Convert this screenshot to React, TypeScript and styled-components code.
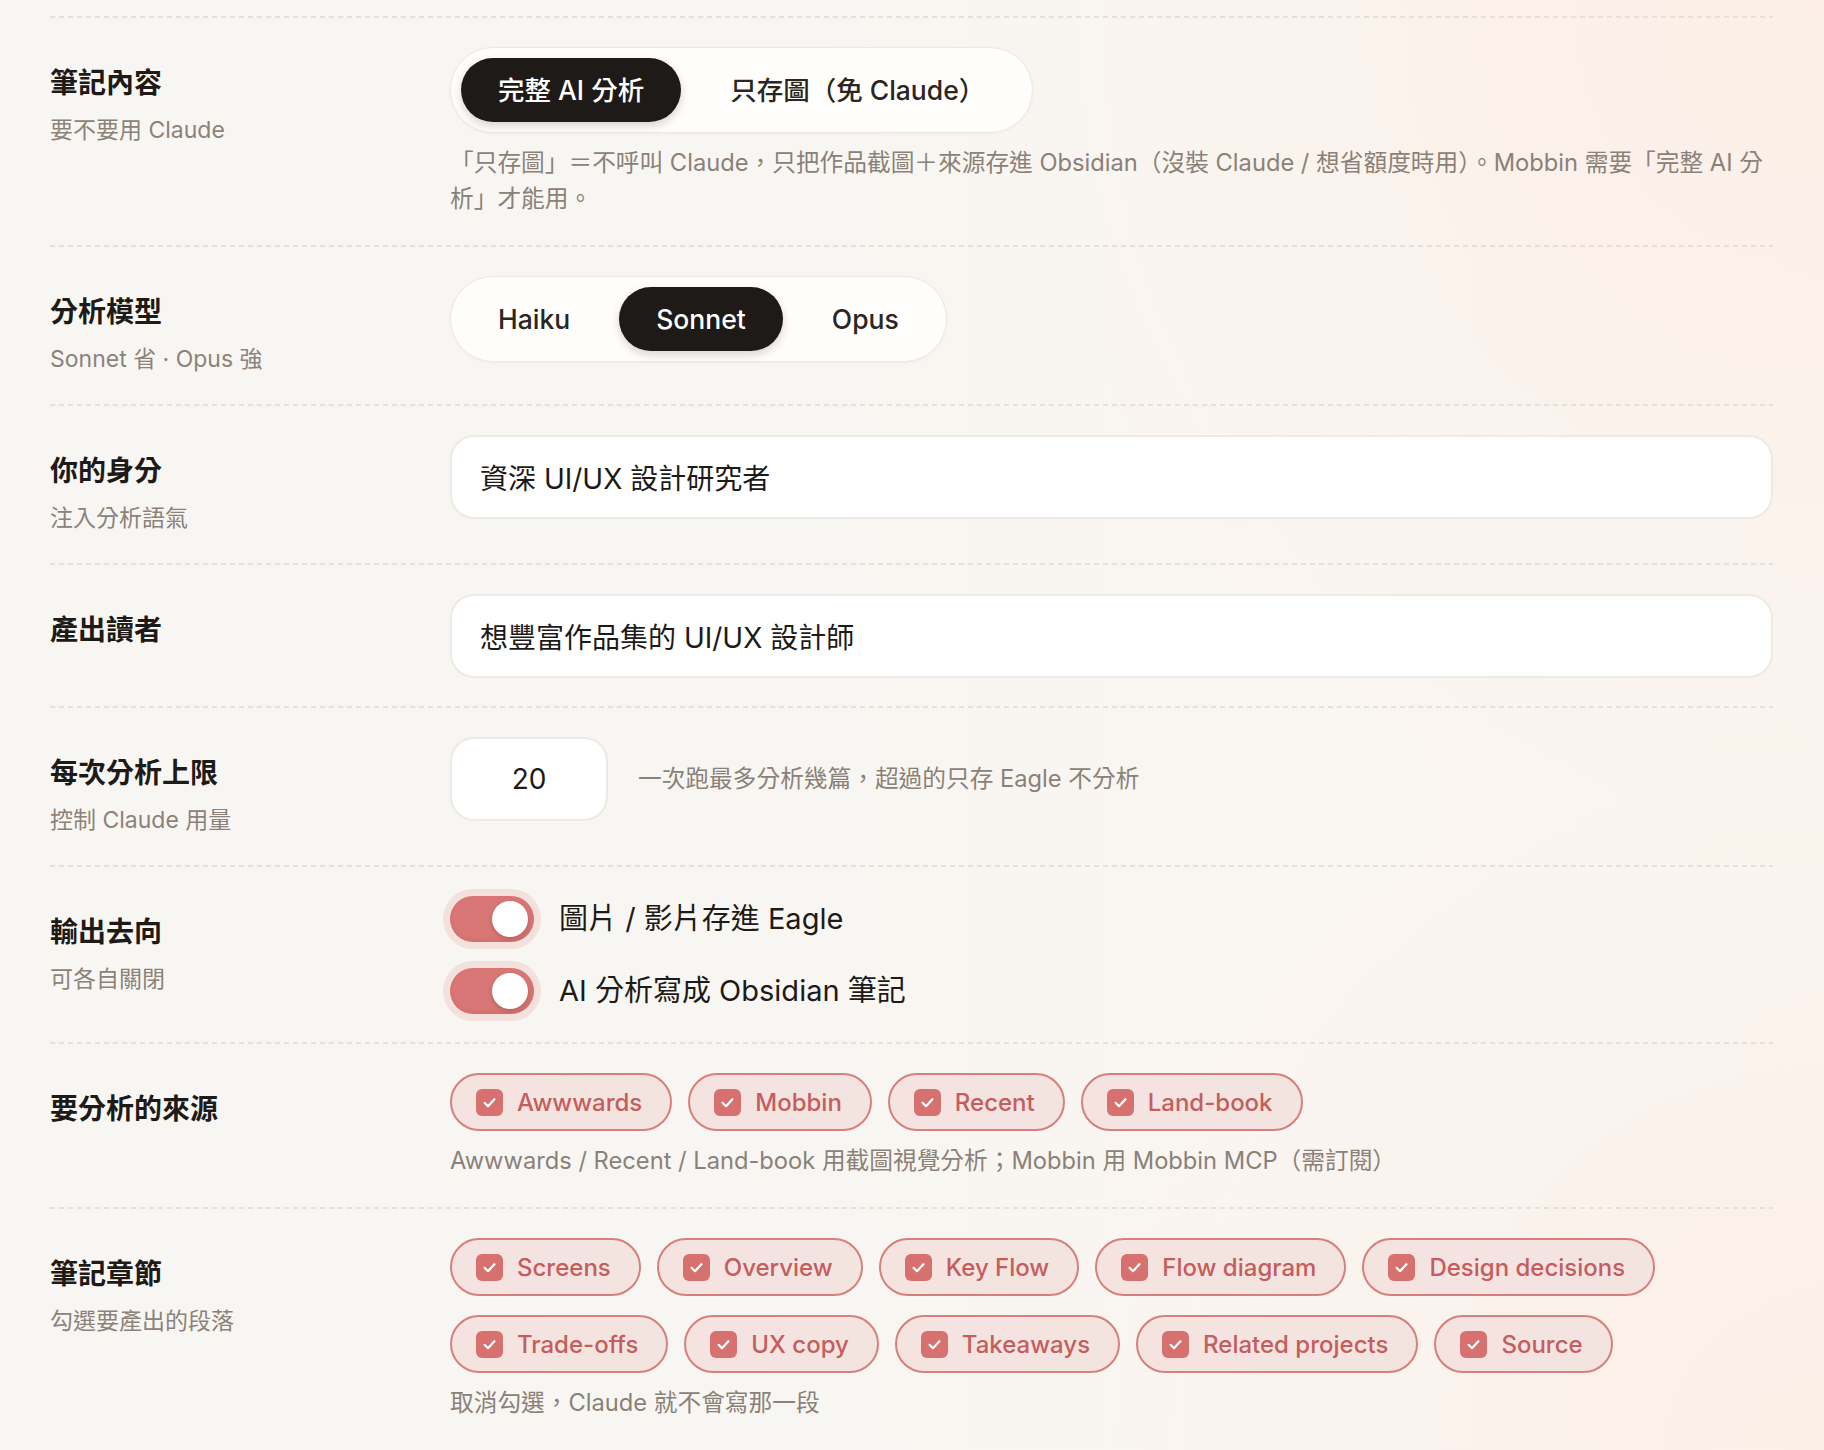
import React from "react";
import styled, { createGlobalStyle } from "styled-components";

const GlobalStyle = createGlobalStyle`
  html, body { margin: 0; padding: 0; }
  body {
    background: #f8f6f2;
    font-family: Inter, "Noto Sans CJK TC", sans-serif;
    color: #1d1a17;
    -webkit-font-smoothing: antialiased;
  }
  * { box-sizing: border-box; }
`;

const Page = styled.div`
  min-height: 1450px;
  padding: 16px 51px 0 50px;
  background:
    radial-gradient(ellipse 45% 60% at 100% 0%, rgba(252, 238, 230, 0.9), rgba(252, 238, 230, 0) 100%),
    radial-gradient(ellipse 40% 50% at 100% 100%, rgba(252, 238, 230, 0.8), rgba(252, 238, 230, 0) 100%),
    linear-gradient(90deg, #f8f6f2 0%, #f8f6f2 45%, #fbf5f0 100%);
`;

const Divider = styled.div`
  height: 2px;
  background: repeating-linear-gradient(90deg, #e5e0d9 0 5px, transparent 5px 9px);
`;

const Row = styled.div`
  display: grid;
  grid-template-columns: 400px 1fr;
  padding: 29px 0 28px;
`;

const LabelCol = styled.div`
  padding-top: 18px;
`;

const Title = styled.div`
  font-size: 28px;
  line-height: 36px;
  font-weight: 700;
  color: #1d1a17;
`;

const Sub = styled.div`
  margin-top: 12px;
  font-size: 23px;
  line-height: 34px;
  color: #8b8279;
`;

const Control = styled.div`
  min-width: 0;
  display: flex;
  flex-direction: column;
  align-items: flex-start;
`;

const Hint = styled.div`
  margin-top: 12px;
  font-size: 23.7px;
  line-height: 36px;
  color: #8a8178;
`;

const Segmented = styled.div`
  display: inline-flex;
  gap: 12px;
  padding: 10px;
  border: 1px solid #ece8e2;
  background: #fffefd;
  border-radius: 999px;
  box-shadow: 0 1px 3px rgba(80, 60, 40, 0.04);
`;

const SegButton = styled.button<{ $active?: boolean }>`
  height: 64px;
  padding: 0 37px;
  border: none;
  border-radius: 999px;
  font-family: inherit;
  font-size: 26.5px;
  line-height: 1;
  font-weight: 500;
  white-space: nowrap;
  cursor: pointer;
  background: ${(p) => (p.$active ? "#1d1a17" : "transparent")};
  color: ${(p) => (p.$active ? "#ffffff" : "#2a2622")};
  box-shadow: ${(p) => (p.$active ? "0 4px 10px rgba(29, 26, 23, 0.18)" : "none")};
`;

const TextField = styled.input`
  width: 100%;
  height: 84px;
  padding: 0 28px;
  border: 2px solid #ede9e4;
  border-radius: 24px;
  background: #ffffff;
  font-family: inherit;
  font-size: 28px;
  color: #1d1a17;
  outline: none;
`;

const NumberLine = styled.div`
  display: flex;
  align-items: center;
  gap: 30px;
`;

const NumberField = styled(TextField)`
  width: 158px;
  padding: 0;
  text-align: center;
`;

const InlineHint = styled.span`
  font-size: 23.7px;
  line-height: 36px;
  color: #8a8178;
`;

const ToggleList = styled.div`
  display: flex;
  flex-direction: column;
  gap: 26px;
`;

const ToggleRow = styled.label`
  display: flex;
  align-items: center;
  gap: 25px;
  font-size: 29px;
  line-height: 36px;
  color: #1d1a17;
`;

const Track = styled.span<{ $on: boolean }>`
  position: relative;
  flex: none;
  width: 84px;
  height: 46px;
  border-radius: 999px;
  background: ${(p) => (p.$on ? "#d87775" : "#d9d4ce")};
  box-shadow: 0 0 0 7px #f4e1dd, inset 0 -2px 4px rgba(150, 60, 60, 0.12);
`;

const Knob = styled.span`
  position: absolute;
  top: 5px;
  right: 6px;
  width: 36px;
  height: 36px;
  border-radius: 50%;
  background: #ffffff;
  box-shadow: 0 2px 4px rgba(120, 40, 40, 0.3);
`;

const ChipWrap = styled.div`
  display: flex;
  flex-wrap: wrap;
  gap: 19px 16px;
`;

const Chip = styled.button`
  display: inline-flex;
  align-items: center;
  gap: 14px;
  height: 58px;
  padding: 0 28px 0 24px;
  border: 2px solid #d6807e;
  border-radius: 999px;
  background: linear-gradient(90deg, #f5e3e0, #f3e4e0);
  color: #c45d5e;
  font-family: inherit;
  font-size: 24px;
  font-weight: 500;
  white-space: nowrap;
  cursor: pointer;
`;

const CheckBox = styled.span`
  flex: none;
  width: 27px;
  height: 27px;
  border-radius: 6px;
  background: #d6716f;
  display: flex;
  align-items: center;
  justify-content: center;
`;

const Check = () => (
  <CheckBox>
    <svg width="17" height="17" viewBox="0 0 17 17" fill="none">
      <path d="M3.6 8.8 L7 12.2 L13.4 5.2" stroke="#fff" strokeWidth="2.2" strokeLinecap="round" strokeLinejoin="round" />
    </svg>
  </CheckBox>
);

const Toggle = ({ label }: { label: string }) => (
  <ToggleRow>
    <Track $on>
      <Knob />
    </Track>
    {label}
  </ToggleRow>
);

const sources = ["Awwwards", "Mobbin", "Recent", "Land-book"];
const sections = [
  "Screens",
  "Overview",
  "Key Flow",
  "Flow diagram",
  "Design decisions",
  "Trade-offs",
  "UX copy",
  "Takeaways",
  "Related projects",
  "Source",
];

export default function App() {
  return (
    <>
      <GlobalStyle />
      <Page>
        <Divider />
        <Row>
          <LabelCol>
            <Title>筆記內容</Title>
            <Sub>要不要用 Claude</Sub>
          </LabelCol>
          <Control>
            <Segmented>
              <SegButton $active>完整 AI 分析</SegButton>
              <SegButton>只存圖（免 Claude）</SegButton>
            </Segmented>
            <Hint>
              「只存圖」＝不呼叫 Claude，只把作品截圖＋來源存進 Obsidian（沒裝 Claude / 想省額度時用）。Mobbin 需要「完整 AI 分
              <br />
              析」才能用。
            </Hint>
          </Control>
        </Row>
        <Divider />
        <Row>
          <LabelCol>
            <Title>分析模型</Title>
            <Sub>Sonnet 省 · Opus 強</Sub>
          </LabelCol>
          <Control>
            <Segmented>
              <SegButton>Haiku</SegButton>
              <SegButton $active>Sonnet</SegButton>
              <SegButton>Opus</SegButton>
            </Segmented>
          </Control>
        </Row>
        <Divider />
        <Row>
          <LabelCol>
            <Title>你的身分</Title>
            <Sub>注入分析語氣</Sub>
          </LabelCol>
          <Control>
            <TextField defaultValue="資深 UI/UX 設計研究者" />
          </Control>
        </Row>
        <Divider />
        <Row>
          <LabelCol>
            <Title>產出讀者</Title>
          </LabelCol>
          <Control>
            <TextField defaultValue="想豐富作品集的 UI/UX 設計師" />
          </Control>
        </Row>
        <Divider />
        <Row>
          <LabelCol>
            <Title>每次分析上限</Title>
            <Sub>控制 Claude 用量</Sub>
          </LabelCol>
          <Control>
            <NumberLine>
              <NumberField defaultValue="20" />
              <InlineHint>一次跑最多分析幾篇，超過的只存 Eagle 不分析</InlineHint>
            </NumberLine>
          </Control>
        </Row>
        <Divider />
        <Row>
          <LabelCol>
            <Title>輸出去向</Title>
            <Sub>可各自關閉</Sub>
          </LabelCol>
          <Control>
            <ToggleList>
              <Toggle label="圖片 / 影片存進 Eagle" />
              <Toggle label="AI 分析寫成 Obsidian 筆記" />
            </ToggleList>
          </Control>
        </Row>
        <Divider />
        <Row>
          <LabelCol>
            <Title>要分析的來源</Title>
          </LabelCol>
          <Control>
            <ChipWrap>
              {sources.map((s) => (
                <Chip key={s}>
                  <Check />
                  {s}
                </Chip>
              ))}
            </ChipWrap>
            <Hint>Awwwards / Recent / Land-book 用截圖視覺分析；Mobbin 用 Mobbin MCP（需訂閱）</Hint>
          </Control>
        </Row>
        <Divider />
        <Row>
          <LabelCol>
            <Title>筆記章節</Title>
            <Sub>勾選要產出的段落</Sub>
          </LabelCol>
          <Control>
            <ChipWrap>
              {sections.map((s) => (
                <Chip key={s}>
                  <Check />
                  {s}
                </Chip>
              ))}
            </ChipWrap>
            <Hint>取消勾選，Claude 就不會寫那一段</Hint>
          </Control>
        </Row>
      </Page>
    </>
  );
}
